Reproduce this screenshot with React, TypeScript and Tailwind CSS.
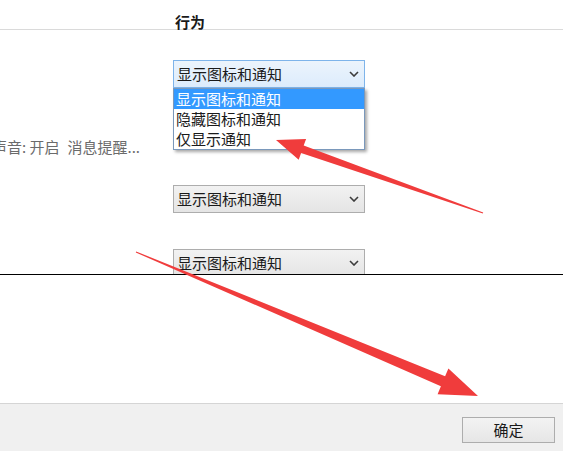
import React from 'react';

const font = { fontFamily: '"Noto Sans CJK SC", "Microsoft YaHei", sans-serif' };

const Chevron: React.FC = () => (
    <svg width="10" height="6" viewBox="0 0 10 6" className="shrink-0">
        <polyline points="1,1 5,5 9,1" fill="none" stroke="#3c3c3c" strokeWidth="1.6" />
    </svg>
);

interface SelectProps {
    focused?: boolean;
}

const Select: React.FC<SelectProps> = ({ focused }) => (
    <div
        className={
            focused
                ? 'w-[192px] h-[28px] ml-[173px] flex items-center justify-between pl-[3px] pr-[5px] border border-[#7eb4ea] bg-gradient-to-b from-[#ecf4fc] to-[#dcecfc]'
                : 'w-[192px] h-[28px] ml-[173px] flex items-center justify-between pl-[3px] pr-[5px] border border-[#adadad] bg-gradient-to-b from-[#f2f2f2] to-[#e5e5e5]'
        }
    >
        <span className="text-[15px] leading-[18px] text-[#1a1a1a]">显示图标和通知</span>
        <Chevron />
    </div>
);

const options = ['显示图标和通知', '隐藏图标和通知', '仅显示通知'];

export default function App() {
    return (
        <div className="relative w-[563px] h-[451px] overflow-hidden bg-white flex flex-col" style={font}>
            {/* 表头 */}
            <div className="h-[30px] shrink-0 border-b border-[#dadada] pl-[175px] pt-[9px]">
                <span className="text-[15px] leading-[18px] font-bold text-[#1a1a1a]">行为</span>
            </div>

            {/* 列表区域 */}
            <div className="relative h-[245px] shrink-0 overflow-hidden border-b border-black pt-[30px]">
                <Select focused />

                <div className="mt-[51px] ml-[-8px] h-[16px] flex items-center text-[15px] leading-[16px] text-[#6b6b6b] whitespace-nowrap">
                    <span>声音: 开启</span>
                    <span className="ml-[8px]">消息提醒...</span>
                </div>

                <div className="mt-[30px]">
                    <Select />
                </div>
                <div className="mt-[36px]">
                    <Select />
                </div>

                {/* 下拉菜单 */}
                <div className="absolute top-[58px] left-[173px] w-[192px] bg-white border border-[#7a98bb] shadow-[2px_2px_3px_rgba(0,0,0,0.35)] flex flex-col">
                    {options.map((o, i) => (
                        <div
                            key={o}
                            className={
                                i === 0
                                    ? 'h-[20px] pl-[2px] flex items-center text-[15px] leading-[18px] bg-[#3399ff] text-white'
                                    : 'h-[20px] pl-[2px] flex items-center text-[15px] leading-[18px] text-[#1a1a1a]'
                            }
                        >
                            {o}
                        </div>
                    ))}
                </div>
            </div>

            <div className="flex-1" />

            {/* 底部按钮 */}
            <div className="h-[48px] shrink-0 bg-[#f0f0f0] border-t border-[#d5d5d5] flex justify-end items-start pt-[13px] pr-[8px]">
                <button className="w-[93px] h-[26px] border border-[#adadad] bg-gradient-to-b from-[#f3f3f3] to-[#e6e6e6] text-[15px] leading-[18px] text-[#1a1a1a]">
                    确定
                </button>
            </div>

            {/* 红色箭头标注 */}
            <svg className="absolute inset-0 pointer-events-none" width="563" height="451" viewBox="0 0 563 451">
                <polygon
                    fill="#f03c3c"
                    points="483.2,212.5 303.7,145.5 306.1,138.9 276,140 298.7,159.7 301.1,153.1 482.8,213.5"
                />
                <polygon
                    fill="#f03c3c"
                    points="135.8,252.5 440.9,386.3 437.6,394.2 478,396 448.4,368.4 445.1,376.2 136.2,251.5"
                />
            </svg>
        </div>
    );
}
